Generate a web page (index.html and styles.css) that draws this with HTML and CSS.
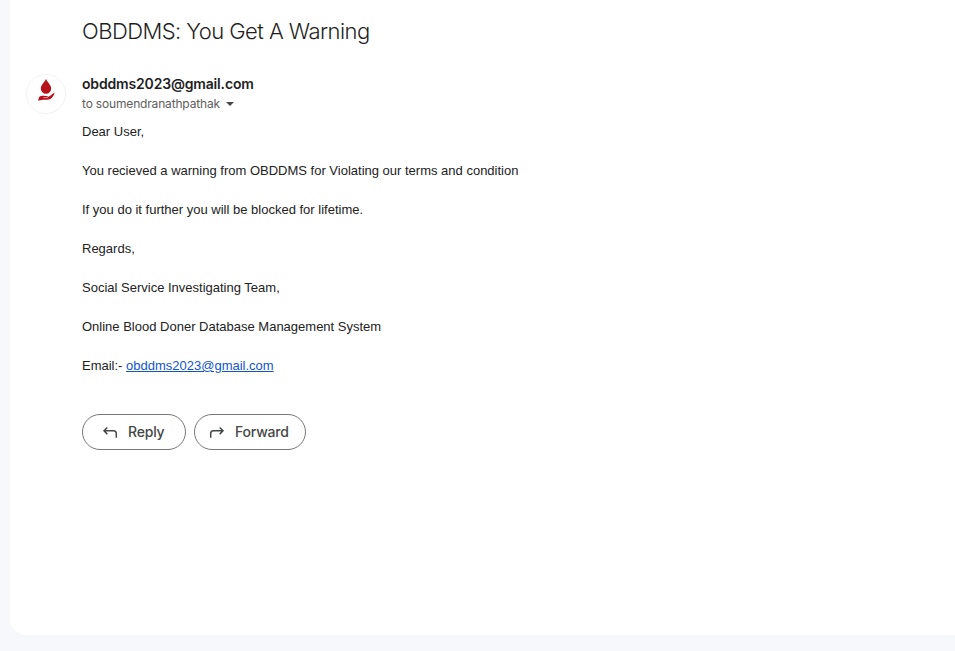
FILE: index.html
```html
<!DOCTYPE html>
<html lang="en">
<head>
<meta charset="utf-8">
<title>OBDDMS: You Get A Warning</title>
<link rel="stylesheet" href="styles.css">
</head>
<body>
<main class="panel">
  <h1 class="subject">OBDDMS: You Get A Warning</h1>
  <article class="message">
    <div class="avatar">
      <svg width="40" height="40" viewBox="0 0 40 40">
        <path d="M20 5C18.400 8.400 14.800 11 14.800 14.600a5.200 5.200 0 0 0 10.400 0C25.200 11 21.600 8.400 20 5Z" fill="#b5121b"/>
        <path d="M12 26.500L13.300 22.800C15 21.600 17 21.600 19.500 21.900C21 22 22.300 22 22 22.900C24.500 22.300 26 19.800 28.300 18.800C28.800 20.200 27 23 24.800 24.700C22 26.200 19.500 25.500 17 25.700C15 25.800 13.500 26.500 12 26.500Z" fill="#b5121b"/>
        <path d="M17.500 23.600h4.500" stroke="#fff" stroke-width=".5"/>
      </svg>
    </div>
    <div class="content">
      <div class="sender"><span>obddms2023@gmail.com</span></div>
      <div class="recipient"><span>to soumendranathpathak</span><i class="caret"></i></div>
      <div class="body">
        <p>Dear User,</p>
        <p>You recieved a warning from OBDDMS for Violating our terms and condition</p>
        <p>If you do it further you will be blocked for lifetime.</p>
        <p>Regards,</p>
        <p>Social Service Investigating Team,</p>
        <p>Online Blood Doner Database Management System</p>
        <p>Email:- <a href="mailto:obddms2023@gmail.com">obddms2023@gmail.com</a></p>
      </div>
      <div class="actions">
        <button class="reply"><svg width="20" height="20" viewBox="0 0 20 20"><path d="M7.300 5.500 4 8.800 7.300 12.100M4 8.800H13.500Q16.300 8.800 16.300 11.600V15.700"/></svg><span>Reply</span></button>
        <button class="forward"><svg width="20" height="20" viewBox="0 0 20 20"><path d="M12.700 5.500 16 8.800 12.700 12.100M16 8.800H6.500Q3.700 8.800 3.700 11.600V15.700"/></svg><span>Forward</span></button>
      </div>
    </div>
  </article>
</main>
</body>
</html>
```
FILE: styles.css
```css
* { box-sizing: border-box; }
body {
  margin: 0;
  height: 651px;
  padding: 0 0 16px 10px;
  overflow: hidden;
  background: #f6f8fc;
  color: #1f1f1f;
  font-family: "Liberation Sans", Arial, sans-serif;
}
.panel {
  height: 635px;
  padding: 17px 16px 0;
  background: #fff;
  border-radius: 0 0 0 16px;
}
.subject {
  margin: 0 0 0 56px;
  font: 300 22px/28px Inter, sans-serif;
  letter-spacing: -0.55px;
}
.message {
  display: flex;
  gap: 16px;
  margin-top: 29px;
}
.avatar {
  width: 40px;
  height: 40px;
  border: 1px solid #f3f3f3;
  border-radius: 50%;
}
.avatar svg { display: block; margin: -1px; }
.sender {
  font: 600 14px/20px Inter, sans-serif;
  letter-spacing: -0.17px;
}
.recipient {
  display: flex;
  align-items: center;
  gap: 6px;
  height: 20px;
  color: #5e5e5e;
  font: 12px/20px Inter, sans-serif;
  letter-spacing: -0.17px;
}
.caret {
  border: 4px solid transparent;
  border-top-color: #444746;
  border-bottom: 0;
}
.body {
  display: flex;
  flex-direction: column;
  gap: 19px;
  margin-top: 8px;
  color: #222;
  font-size: 13px;
  line-height: 20px;
}
.body p { margin: 0; }
.body a { color: #15c; }
.actions {
  display: flex;
  gap: 8px;
  margin-top: 38px;
}
.actions button {
  display: flex;
  align-items: center;
  gap: 8px;
  height: 36px;
  border: 1px solid #747775;
  border-radius: 18px;
  background: #fff;
  color: #444746;
  font: 500 14px/20px Inter, sans-serif;
  letter-spacing: -0.2px;
}
.actions .reply { width: 104px; padding: 0 0 0 17px; }
.actions .forward { width: 112px; padding: 0 0 0 12px; }
.actions path {
  fill: none;
  stroke: #444746;
  stroke-width: 1.5;
}
```
